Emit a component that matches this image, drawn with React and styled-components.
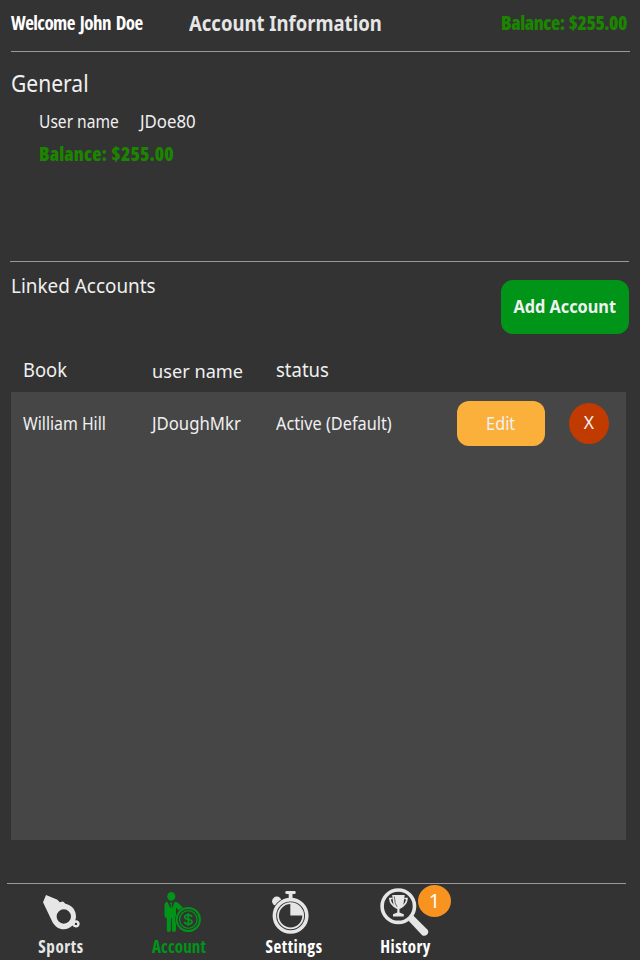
import React from "react";
import styled, { createGlobalStyle } from "styled-components";

const GlobalStyle = createGlobalStyle`
  * { box-sizing: border-box; }
  body { margin: 0; background: #333; }
  button { border: 0; padding: 0; margin: 0; color: inherit; font: inherit; cursor: pointer; }
`;

const Page = styled.div`
  width: 640px;
  height: 960px;
  display: flex;
  flex-direction: column;
  overflow: hidden;
  background: #333;
  color: #f0f0f0;
  font-family: "Noto Sans", "Open Sans", sans-serif;
  white-space: nowrap;
`;

/* Text drawn slightly narrower (or wider) than the face's natural width */
const Fit = styled.span`
  display: inline-block;
  transform: scaleX(${(p) => p.$scale});
  transform-origin: ${(p) => (p.$center ? "center" : "left")};
`;

const Header = styled.header`
  display: grid;
  grid-template-columns: 178px 1fr auto;
  height: 52px;
  margin: 0 10px 0 11px;
  padding-right: 3px;
  border-bottom: 1px solid #999;
  line-height: 47px;
`;

const Condensed = styled.div`
  font-family: "Open Sans", sans-serif;
  font-weight: 700;
  font-stretch: 75%;
  font-variant-ligatures: none;
`;

const Welcome = styled(Condensed)`
  font-size: 19px;
  color: #fff;
  letter-spacing: -0.55px;
  word-spacing: 2px;
`;

const PageTitle = styled.h1`
  margin: 0;
  font-size: 20.5px;
  font-weight: 700;
  line-height: 46px;
  color: #e6e6e6;
`;

const Balance = styled(Condensed)`
  font-size: 19px;
  font-weight: 800;
  letter-spacing: ${(p) => (p.$wide ? "0.1px" : "-0.45px")};
  word-spacing: 1px;
  color: #1c8500;
`;

const General = styled.section`
  height: 210px;
  margin: 0 11px 0 10px;
  padding-top: 11px;
  border-bottom: 1px solid #999;
`;

const SectionTitle = styled.h2`
  margin: 0;
  padding-left: 1px;
  font-size: 23px;
  font-weight: 400;
  line-height: 40px;
`;

const Details = styled.div`
  padding-left: 29px;
  line-height: 34px;
`;

const Field = styled.div`
  display: grid;
  grid-template-columns: 101px auto;
  height: 34px;
  font-size: 17.5px;
  line-height: 36px;
`;

const LinkedHead = styled.div`
  display: flex;
  justify-content: space-between;
  height: 90px;
  padding: 4px 11px 0 11px;
`;

const LinkedTitle = styled.h2`
  margin: 0;
  font-size: 20px;
  font-weight: 400;
  line-height: 40px;
`;

const AddButton = styled.button`
  width: 128px;
  height: 54px;
  margin-top: 14px;
  border-radius: 12px;
  background: #009419;
  font-size: 18px;
  font-weight: 700;
  padding-bottom: 2px;
  line-height: 51px;
`;

const Row = styled.div`
  display: grid;
  grid-template-columns: 128.5px 124.5px 181px 112px 40px;
  padding-left: 12px;
`;

const TableHead = styled(Row)`
  height: 40px;
  margin-left: 11px;
  line-height: 36px;
`;

const HeadCell = styled.span`
  font-size: ${(p) => (p.$small ? "18px" : "20px")};
  line-height: ${(p) => (p.$small ? "38px" : "36px")};
`;

const TablePanel = styled.div`
  width: 615px;
  height: 448px;
  margin-left: 11px;
  padding-top: 9px;
  background: #464646;
`;

const AccountRow = styled(Row)`
  height: 45px;
  font-size: 17.5px;
  line-height: 44px;
`;

const EditButton = styled.button`
  width: 88px;
  height: 45px;
  border-radius: 12px;
  background: #fbb03b;
  line-height: 43px;
`;

const RemoveButton = styled.button`
  width: 40px;
  height: 41px;
  margin-top: 2px;
  border-radius: 50%;
  background: #c13a00;
  padding-bottom: 3px;
  line-height: 38px;
`;

const NavRule = styled.div`
  width: 619px;
  height: 1px;
  margin: 43px 0 0 7px;
  background: #999;
`;

const Nav = styled.nav`
  display: grid;
  grid-template-columns: 118px 118px 112px 111px;
  padding-left: 2px;
  height: 76px;
`;

const NavItem = styled.a`
  position: relative;
  display: flex;
  flex-direction: column;
  align-items: center;
  color: ${(p) => p.$color};
`;

const NavIcon = styled.svg`
  display: block;
  width: 56px;
  height: 52px;
  fill: ${(p) => p.$tint || "#e6e6e6"};
  color: ${(p) => p.$tint || "#e6e6e6"};
`;

const NavLabel = styled(Condensed)`
  font-size: 17px;
  line-height: 21px;
  letter-spacing: ${(p) => p.$spacing};
`;

const Badge = styled.span`
  position: absolute;
  top: 1px;
  right: 10px;
  width: 33px;
  height: 32px;
  border-radius: 50%;
  background: #f7931e;
  color: #fff;
  font-size: 20px;
  line-height: 32px;
  text-align: center;
`;

const WhistleIcon = () => (
  <NavIcon viewBox="33 884 56 52">
    <path
      fillRule="evenodd"
      d="M46 895 L57.5 899.7 L59.7 902.3 L63 901.5 L65.5 903.8 C72 905 76.2 910.3 76 917 C75.9 918.5 75.5 919.5 75 920.4 C77.7 919.8 79.7 921.5 79.7 923.8 C79.7 926.3 77.6 928 75.4 927.5 C74 927.2 73 926.4 72.5 925.6 C70 928 67.3 929.2 63.7 929.2 C58.7 929.2 55.3 926.5 52.8 922.7 L43 902.3 Z M71 916.5 A7.2 7.2 0 1 0 56.6 916.5 A7.2 7.2 0 1 0 71 916.5 Z M77.2 923.9 A1.2 1.2 0 1 0 74.8 923.9 A1.2 1.2 0 1 0 77.2 923.9 Z"
    />
  </NavIcon>
);

const AccountIcon = () => (
  <NavIcon $tint="#009419" viewBox="151 884 56 52">
    <ellipse cx="171.3" cy="896.3" rx="4" ry="4.4" />
    <path d="M167.5 901.8 L171.2 910.5 L174.8 901.8 C177 901.8 178.6 903.2 179.8 904.5 L182.8 907.5 L188 908 A11 11 0 0 0 179 910.5 L176 907.5 L176 930 Q176 932 174 932 Q172 932 172 930 L171.8 918 L171 918 L170.8 930 Q170.8 932 168.8 932 Q166.8 932 166.8 930 L166.8 918 Q164.5 918 164.5 915.5 L164.5 906 Q164.5 902 167.5 901.8 Z" />
    <path d="M171.2 902 L170.1 903.2 L170.8 905 L170.2 910 L171.2 912 L172.2 910 L171.6 905 L172.3 903.2 Z" />
    <circle cx="188.3" cy="919.5" r="13" fill="#333" />
    <circle cx="188.3" cy="919.5" r="11.6" fill="none" stroke="currentColor" strokeWidth="2" />
    <circle cx="188.3" cy="919.5" r="8.8" fill="none" stroke="currentColor" strokeWidth="1.3" />
    <path
      fill="none"
      stroke="currentColor"
      strokeWidth="1.8"
      d="M192 917 C191.4 915.4 190 915 188.3 915 C186.2 915 184.8 915.9 184.8 917.2 C184.8 920.2 192 918.7 192 921.8 C192 923.3 190.4 924.1 188.3 924.1 C186.2 924.1 184.8 923.4 184.4 921.8 M188.3 913.3 V925.8"
    />
  </NavIcon>
);

const StopwatchIcon = () => (
  <NavIcon viewBox="266 884 56 52">
    <circle cx="276.8" cy="901.2" r="4.7" />
    <rect x="285.3" y="891" width="10.4" height="3" rx="1.2" />
    <circle cx="290.6" cy="915.8" r="18.8" fill="#333" />
    <rect x="288.7" y="893" width="3.8" height="6" />
    <circle cx="290.6" cy="915.8" r="16.2" fill="none" stroke="currentColor" strokeWidth="3.6" />
    <circle cx="290.6" cy="915.8" r="12.6" fill="none" stroke="currentColor" strokeWidth="1.8" />
    <path d="M290.3 915.5 V903.3 A12.4 12.4 0 0 1 302.8 915.5 Z" />
  </NavIcon>
);

const TrophySearchIcon = () => (
  <NavIcon viewBox="377.5 884 56 52">
    <circle cx="397.8" cy="906.2" r="16.2" fill="none" stroke="currentColor" strokeWidth="3.6" />
    <path d="M408 917.5 L410.5 914.5 L413 915.7 L427.3 930 A4 4 0 0 1 421.7 935.2 L408.8 921.5 Z" />
    <path d="M391.7 895 H404.2 L403.2 902.5 Q402.4 908 399 909 V912.5 L403.3 914.3 V916.6 H392.5 V914.3 L396.8 912.5 V909 Q393.4 908 392.6 902.5 Z" />
    <path
      fill="none"
      stroke="currentColor"
      strokeWidth="1.7"
      d="M392 898.5 H389.4 Q389.8 904.8 396 907.5 M403.8 898.5 H406.5 Q406 904.8 399.8 907.5"
    />
    <path fill="none" stroke="#333" strokeWidth="0.7" d="M393.8 896.5 Q394.2 904.5 396.5 906.8" />
  </NavIcon>
);

export default function App() {
  return (
    <Page>
      <GlobalStyle />
      <Header>
        <Welcome>Welcome John Doe</Welcome>
        <PageTitle>
          <Fit $scale={0.902}>Account Information</Fit>
        </PageTitle>
        <Balance>Balance: $255.00</Balance>
      </Header>
      <General>
        <SectionTitle>
          <Fit $scale={0.915}>General</Fit>
        </SectionTitle>
        <Details>
          <Field>
            <Fit $scale={0.89}>User name</Fit>
            <Fit $scale={0.96}>JDoe80</Fit>
          </Field>
          <Balance $wide>Balance: $255.00</Balance>
        </Details>
      </General>
      <LinkedHead>
        <LinkedTitle>
          <Fit $scale={0.945}>Linked Accounts</Fit>
        </LinkedTitle>
        <AddButton>
          <Fit $center $scale={0.905}>Add Account</Fit>
        </AddButton>
      </LinkedHead>
      <TableHead>
        <HeadCell>
          <Fit $scale={0.92}>Book</Fit>
        </HeadCell>
        <HeadCell $small>
          <Fit $scale={1.01}>user name</Fit>
        </HeadCell>
        <HeadCell>
          <Fit $scale={0.925}>status</Fit>
        </HeadCell>
      </TableHead>
      <TablePanel>
        <AccountRow>
          <Fit $scale={0.905}>William Hill</Fit>
          <Fit $scale={0.955}>JDoughMkr</Fit>
          <Fit $scale={0.93}>Active (Default)</Fit>
          <EditButton>
            <Fit $center $scale={0.93}>Edit</Fit>
          </EditButton>
          <RemoveButton>X</RemoveButton>
        </AccountRow>
      </TablePanel>
      <NavRule />
      <Nav>
        <NavItem $color="#e6e6e6">
          <WhistleIcon />
          <NavLabel $spacing="0.6px">Sports</NavLabel>
        </NavItem>
        <NavItem $color="#009419">
          <AccountIcon />
          <NavLabel $spacing="0.1px">Account</NavLabel>
        </NavItem>
        <NavItem $color="#fff">
          <StopwatchIcon />
          <NavLabel $spacing="0.55px">Settings</NavLabel>
        </NavItem>
        <NavItem $color="#fff">
          <TrophySearchIcon />
          <NavLabel $spacing="0.4px">History</NavLabel>
          <Badge>1</Badge>
        </NavItem>
      </Nav>
    </Page>
  );
}
